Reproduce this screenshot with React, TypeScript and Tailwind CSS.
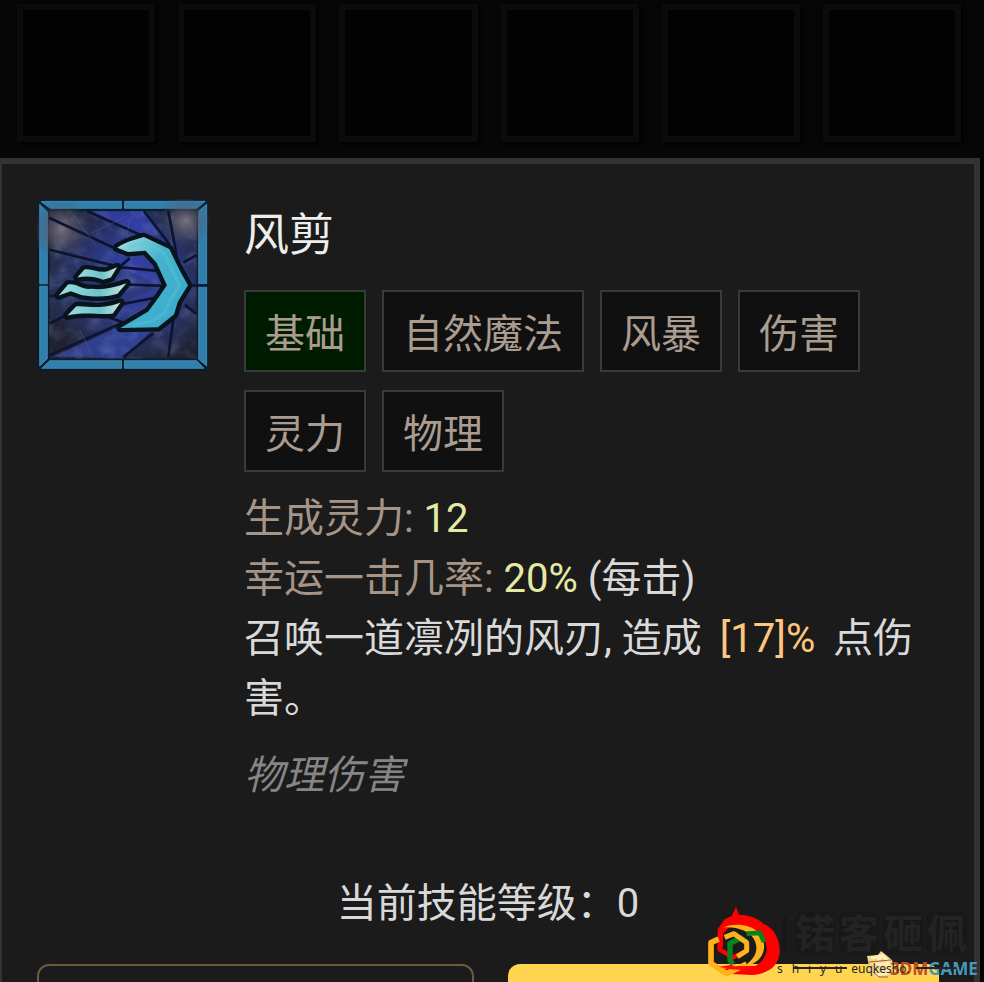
const tags = [
  { name: "基础", active: true },
  { name: "自然魔法", active: false },
  { name: "风暴", active: false },
  { name: "伤害", active: false },
  { name: "灵力", active: false },
  { name: "物理", active: false },
]

const SkillIcon = () => {
  return (
    <svg className="h-[172px] w-[172px] shrink-0" viewBox="52 28 515 515" role="img" aria-label="风剪">
      <defs>
        <radialGradient id="glass" cx="0.56" cy="0.46" r="0.62">
          <stop offset="0" stopColor="#3a42b4" />
          <stop offset="0.4" stopColor="#2c3a88" />
          <stop offset="0.8" stopColor="#242b4c" />
          <stop offset="1" stopColor="#202230" />
        </radialGradient>
        <radialGradient id="corner">
          <stop offset="0" stopColor="#77707a" />
          <stop offset="1" stopColor="#4a4a60" stopOpacity="0" />
        </radialGradient>
        <linearGradient id="wind" x1="0" x2="1" y1="0" y2="1">
          <stop offset="0" stopColor="#a5e0e4" />
          <stop offset="0.4" stopColor="#46b4cc" />
          <stop offset="1" stopColor="#38a6cc" />
        </linearGradient>
        <linearGradient id="gust" x1="0" x2="1" y1="0" y2="0">
          <stop offset="0" stopColor="#9bdcdc" />
          <stop offset="0.6" stopColor="#6cc3cc" />
          <stop offset="1" stopColor="#c8e4dc" />
        </linearGradient>
        <filter id="mottle" x="0" y="0" width="1" height="1">
          <feTurbulence type="fractalNoise" baseFrequency="0.02" numOctaves="3" seed="4" />
          <feColorMatrix values="0 0 0 0 0.35  0 0 0 0 0.45  0 0 0 0 0.85  0 2 0 0 -0.9" />
        </filter>
      </defs>
      <rect x="53" y="29" width="513" height="513" fill="#0b1d30" />
      <g fill="#327fab" stroke="#4fa3c9" strokeWidth="2">
        <path d="M76 35H305V56H92L64 36Z" />
        <path d="M314 35H556L530 56H314Z" />
        <path d="M60 44L83 66V282H60Z" />
        <path d="M60 289H83V506L60 528Z" />
        <path d="M560 44L536 64V282H560Z" />
        <path d="M560 289H536V508L560 528Z" />
        <path d="M66 535L90 512H305V535Z" />
        <path d="M314 535V512H530L552 535Z" />
      </g>
      <rect x="90" y="65" width="439" height="440" fill="url(#glass)" />
      <path d="M90 185L290 225L420 290L310 340L90 400Z" fill="#27345f" opacity="0.5" />
      <path d="M215 65H375L415 135L360 135Z" fill="#3542b5" opacity="0.7" />
      <path d="M100 500L290 415H400L310 505Z" fill="#3549aa" opacity="0.7" />
      <circle cx="125" cy="120" r="90" fill="url(#corner)" />
      <circle cx="495" cy="95" r="80" fill="url(#corner)" />
      <rect x="90" y="65" width="439" height="440" filter="url(#mottle)" opacity="0.25" />
      <path
        d="M88 84L280 173M202 64L365 137M90 180L300 232M300 232L420 244M372 64L450 165M445 64L470 195M490 218L530 196M505 287H562M495 345L530 372M460 390L445 502M310 502L400 430M90 495L305 400M90 400L150 372M320 284L430 288M310 342L415 322M90 320L120 315M260 380L310 398M295 235L330 205"
        fill="none"
        stroke="#0c1431"
        strokeWidth="8"
      />
      <path d="M160 75L230 170M180 420L220 500M215 130L320 80M330 90L310 200M100 290L190 260" fill="none" stroke="#5068b5" strokeWidth="2" opacity="0.6" />
      <g stroke="#07131d" strokeLinejoin="round" strokeWidth="26" paintOrder="stroke">
        <path d="M292 174C320 156 345 150 372 142L448 178L481 245L504 286L474 335L462 374L414 412L302 414L385 365L414 326L441 286L410 219L377 183L325 187Z" fill="url(#wind)" />
        <g fill="url(#gust)">
          <path d="M173 263L194 239C216 234 235 251 263 244L292 232L273 263L250 270C220 258 197 259 173 263Z" />
          <path d="M117 317L145 284C172 279 185 301 216 297C251 301 283 293 320 280L293 312C271 320 231 323 187 316L153 304Z" />
          <path d="M143 377L170 349C207 347 244 361 302 338L279 371C244 377 196 364 143 377Z" />
        </g>
      </g>
      <path d="M325 172L375 158L432 190L462 250L478 287L450 332L434 368L398 393L340 406" fill="none" stroke="#5cc6d6" strokeWidth="10" opacity="0.4" />
    </svg>
  )
}

const Watermark = () => {
  return (
    <div className="pointer-events-none absolute right-0 bottom-0 h-[82px] w-[284px] font-['Noto_Sans','Noto_Sans_CJK_SC',sans-serif]">
      <div className="absolute top-[12px] left-[83px] flex items-center gap-1 text-[40px] leading-[42px] font-bold text-[#232323]">
        <span className="h-9 w-1 bg-[#171717]"></span>
        <span className="ml-1 rounded-lg bg-[#181818]">锘</span>
        <span className="rounded-lg bg-[#181818]">客</span>
        <span className="rounded-lg bg-[#181818]">砸</span>
        <span className="rounded-lg bg-[#181818]">佩</span>
      </div>
      <svg className="absolute top-0 left-0 h-[82px] w-[90px]" viewBox="0 0 270 246" aria-hidden="true">
        <path
          d="M52 154L53 88L74 58L95 48L108 21L117 44C150 44 177 57 191 72C224 84 241 122 239 157C236 196 207 222 157 225L90 222L64 206L140 200L168 197L186 182C215 145 196 108 160 96L124 76L90 80L69 102V141Z"
          fill="#ff0000"
        />
        <path d="M58 148L98 172L132 158" stroke="#ff0000" strokeWidth="13" fill="none" />
        <path d="M70 82C122 62 187 83 192 132C196 166 171 193 131 200C162 178 176 156 166 126C154 92 112 80 70 82Z" fill="#ffb31a" />
        <path d="M140 101L180 99L192 126" fill="none" stroke="#078420" strokeWidth="14" />
        <path d="M98 192L90 180V130L122 114L142 128" fill="none" stroke="#078420" strokeWidth="16" />
        <path d="M56 117L33 128V190L80 221L140 192" fill="none" stroke="#ffb31a" strokeWidth="17" strokeLinejoin="round" />
        <path d="M74 112L102 101L140 128V152L112 170" fill="none" stroke="#ffb31a" strokeWidth="15" strokeLinejoin="round" />
        <path d="M55 200L108 193L96 199L170 197L133 207L158 212L93 208Z" fill="#ff1000" />
      </svg>
      <svg className="absolute top-[50px] left-[164px] h-[30px] w-[34px]" viewBox="0 0 34 30" aria-hidden="true">
        <path d="M4 11L3 6L14 5L17 1L22 5L28 10L29 14L27 24L21 28H12L6 23Z" fill="#f5d58b" />
        <path d="M7 8L17 6L14 11M9 14H25L23 23L12 25M18 5L25 12" fill="none" stroke="#fff0b7" strokeWidth="3" />
        <path d="M5 12L27 10M9 22L15 27H24" fill="none" stroke="#a55a28" strokeWidth="1" />
      </svg>
      <div className="absolute top-[58px] left-[190px] flex text-[17px] leading-[22px] font-bold">
        <span className="text-[#bd4b2b]">3DM</span>
        <span className="text-[#4899b9]">GAME</span>
      </div>
      <div className="absolute top-[61px] left-[77px] flex items-center text-[12px] leading-4 text-[#252525]">
        <div className="flex w-[81px] justify-between">
          <span>s</span><span>h</span><span>i</span><span>y</span><span>u</span><span>e</span>
        </div>
        <span>uqkesho.</span>
      </div>
      <div className="absolute top-[67px] left-[93px] h-0.5 w-[54px] bg-[#252525]"></div>
      <div className="absolute top-[67px] left-[216px] h-0.5 w-10 bg-[#252525]"></div>
    </div>
  )
}

const App = () => {
  return (
    <main className="relative flex h-screen flex-col overflow-hidden bg-black font-[Roboto,'Noto_Sans_CJK_SC',sans-serif] text-[40px] leading-[60px] text-[#d9d9d9]">
      <div className="grid grid-cols-6 gap-[23px] bg-[#060606] pt-1 pr-[23px] pb-4 pl-[17px]">
        {[1, 2, 3, 4, 5, 6].map((slot) => (
          <div key={slot} className="aspect-square border-[6px] border-[#0b0b0b] bg-[#020202] shadow-[2px_2px_3px_#000000]"></div>
        ))}
      </div>

      <section className="mr-1 grow border-t-[6px] border-r-[6px] border-l-2 border-[#333333] bg-[#1b1b1b] pt-[35px] pr-[35px] pl-[35px]">
        <div className="flex gap-[35px]">
          <SkillIcon />
          <div className="grow">
            <h1 className="text-[45px] leading-[74px] text-[#eeeeee]">风剪</h1>
            <ul className="mt-[17px] flex flex-wrap gap-x-4 gap-y-[18px] text-[#ab9c90]">
              {tags.map((tag) => (
                <li
                  key={tag.name}
                  className={`border-2 border-[#3a3a3a] px-[19px] pt-[13px] pb-[5px] ${tag.active ? "bg-[#001c00]" : "bg-[#101010]"}`}
                >
                  {tag.name}
                </li>
              ))}
            </ul>
            <div className="mt-[17px]">
              <p className="text-[#a59588]">
                生成灵力: <span className="text-[#e5eaa3]">12</span>
              </p>
              <p>
                <span className="text-[#a59588]">幸运一击几率:</span> <span className="text-[#e5eaa3]">20%</span> (每击)
              </p>
              <p>
                召唤一道凛冽的风刃, 造成 <span className="mx-2 text-[#ffc67e]">[17]%</span> 点伤害。
              </p>
            </div>
            <p className="mt-[17px] text-[#858585] italic">物理伤害</p>
          </div>
        </div>

        <p className="mt-[68px] text-center">当前技能等级：0</p>

        <div className="mt-[30px] grid grid-cols-[437fr_431fr] gap-[34px]">
          <button type="button" aria-label="减少等级" className="h-24 rounded-xl border-2 border-[#6b5b3b]"></button>
          <button type="button" aria-label="增加等级" className="h-24 rounded-xl bg-[#ffd54f]"></button>
        </div>
      </section>

      <Watermark />
    </main>
  )
}

export default App
